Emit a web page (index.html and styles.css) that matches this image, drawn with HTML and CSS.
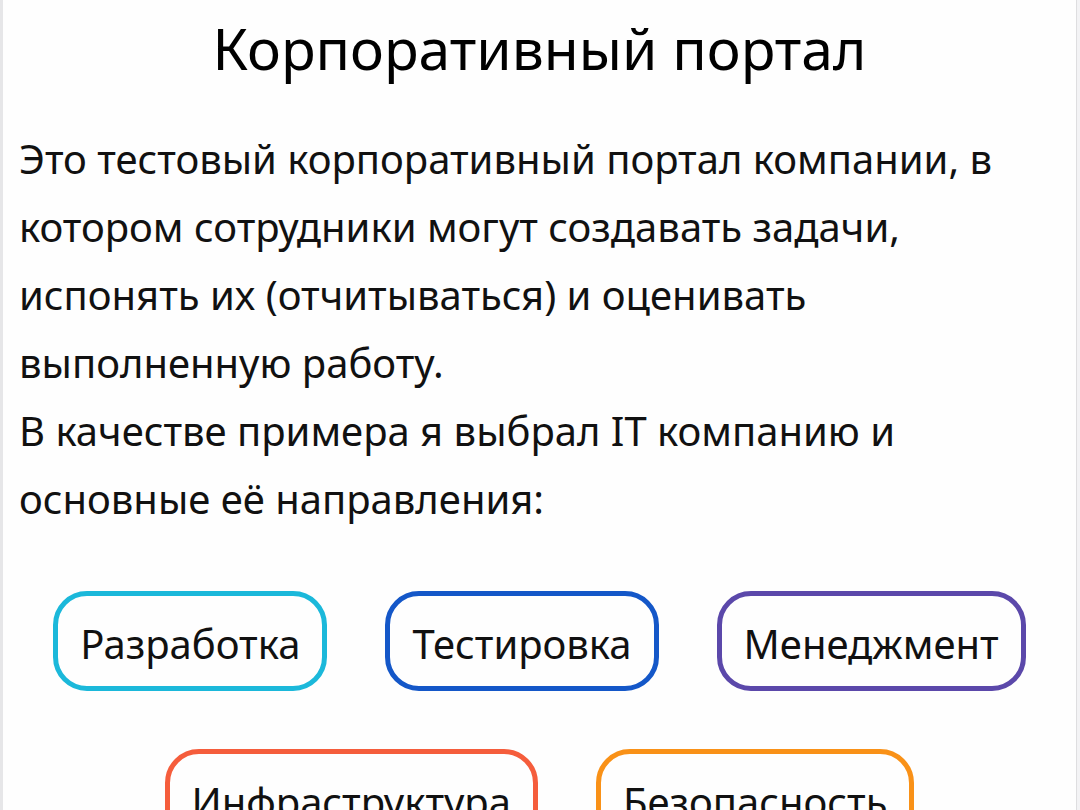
FILE: index.html
```html
<!DOCTYPE html>
<html lang="ru">
<head>
<meta charset="utf-8">
<meta name="viewport" content="width=device-width, initial-scale=1">
<title>Корпоративный портал</title>
<link rel="stylesheet" href="styles.css">
</head>
<body>
<main class="page">
  <h1 class="title">Корпоративный портал</h1>
  <section class="intro">
    <p class="text">Это тестовый корпоративный портал компании, в котором сотрудники могут создавать задачи, испонять их (отчитываться) и оценивать выполненную работу.</p>
    <p class="text">В качестве примера я выбрал IT компанию и основные её направления:</p>
  </section>
  <ul class="areas">
    <li class="area area-dev">Разработка</li>
    <li class="area area-test">Тестировка</li>
    <li class="area area-manage">Менеджмент</li>
    <li class="area area-infra">Инфраструктура</li>
    <li class="area area-security">Безопасность</li>
  </ul>
</main>
</body>
</html>
```
FILE: styles.css
```css
* { box-sizing: border-box; }
body {
  margin: 0;
  padding: 0 3px;
  background: #f3f3f5;
  color: #111;
  font-family: "Noto Sans", sans-serif;
  overflow: hidden;
}
.page {
  min-height: 100vh;
  padding: 8px 16px 0;
  background: #fefefe;
  border-right: 1px solid #dedee0;
  box-shadow: -3px 0 0 #e6e6e8;
}
.title {
  margin: 0 0 37px;
  color: #000;
  font-size: 57px;
  line-height: 80px;
  font-weight: 400;
  text-align: center;
}
.text {
  margin: 0;
  font-size: 40px;
  line-height: 68px;
}
.areas {
  display: flex;
  flex-wrap: wrap;
  justify-content: center;
  gap: 58px;
  margin: 58px 0 0;
  padding: 0;
  list-style: none;
}
.area {
  padding: 23px 22px 17px;
  border: 5px solid;
  border-radius: 34px;
  font-size: 40px;
  line-height: 50px;
}
.area-dev { border-color: #1bb8da; }
.area-test { border-color: #1457c8; }
.area-manage { border-color: #5b48aa; }
.area-infra { border-color: #f55d3c; }
.area-security { border-color: #f99117; }
```
